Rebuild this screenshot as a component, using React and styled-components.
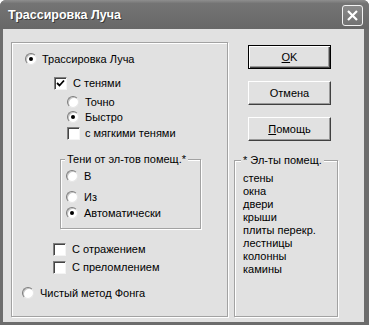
import React from 'react';
import styled, { createGlobalStyle } from 'styled-components';

const GlobalStyle = createGlobalStyle`
  html, body {
    margin: 0;
    padding: 0;
    background: #ffffff;
  }
  * {
    box-sizing: border-box;
  }
`;

const font = `"Liberation Sans", Arial, sans-serif`;

const Window = styled.div`
  width: 369px;
  height: 325px;
  display: flex;
  flex-direction: column;
  background: #6c6c6c;
  border-radius: 6px 6px 0 0;
  overflow: hidden;
  font-family: ${font};
  font-size: 11px;
  color: #000;
`;

const TitleBar = styled.div`
  height: 29px;
  flex: none;
  display: flex;
  align-items: center;
  justify-content: space-between;
  padding: 1px 6px 0 8px;
  background: linear-gradient(#8e8e8e 0%, #747474 12%, #6d6d6d 60%, #676767 100%);
`;

const Title = styled.div`
  font-size: 12.5px;
  font-weight: bold;
  color: #fff;
  text-shadow: 1px 1px 0 #3a3a3a;
`;

const CloseButton = styled.div`
  width: 21px;
  height: 21px;
  border: 1px solid #f2f2f2;
  border-radius: 3px;
  background: linear-gradient(#8a8a8a, #727272);
  display: flex;
  align-items: center;
  justify-content: center;
`;

const Body = styled.div`
  flex: 1;
  display: flex;
  align-items: flex-start;
  margin: 0 5px 3px 3px;
  padding: 13px 0 0 8px;
  background: #e1e1e1;
`;

const etched = `
  border: 1px solid #a2a2a2;
  box-shadow: inset 1px 1px 0 #fff, 1px 1px 0 #fff;
`;

const LeftPanel = styled.div`
  ${etched}
  width: 217px;
  height: 275px;
  display: flex;
  flex-direction: column;
  align-items: flex-start;
`;

const Row = styled.div`
  display: flex;
  align-items: center;
  height: 14px;
  margin-top: ${p => p.$top}px;
  margin-left: ${p => p.$indent}px;
  gap: ${p => p.$gap ?? 6}px;
`;

const Label = styled.span`
  line-height: 14px;
  white-space: nowrap;
`;

const RadioCircle = styled.span`
  width: 12px;
  height: 12px;
  border-radius: 50%;
  background: #fff;
  border: 1px solid;
  border-color: #7c7c7c #e6e6e6 #e6e6e6 #7c7c7c;
  box-shadow: inset 1px 1px 0 #c4c4c4;
  display: flex;
  align-items: center;
  justify-content: center;
  flex: none;
`;

const Dot = styled.span`
  width: 4px;
  height: 4px;
  border-radius: 50%;
  background: #000;
`;

const CheckSquare = styled.span`
  width: 13px;
  height: 13px;
  background: #fff;
  border: 1px solid;
  border-color: #808080 #f4f4f4 #f4f4f4 #808080;
  box-shadow: inset 1px 1px 0 #444;
  display: flex;
  align-items: center;
  justify-content: center;
  flex: none;
`;

const GroupBox = styled.div`
  ${etched}
  position: relative;
  width: ${p => p.$width}px;
  height: ${p => p.$height}px;
  margin-top: ${p => p.$top}px;
  margin-left: ${p => p.$indent || 0}px;
  display: flex;
  flex-direction: column;
  align-items: flex-start;
`;

const Legend = styled.span`
  position: absolute;
  top: -7px;
  left: ${p => p.$left}px;
  padding: 0 2px;
  line-height: 13px;
  background: #e1e1e1;
  white-space: nowrap;
`;

const RightColumn = styled.div`
  margin-left: 6px;
  display: flex;
  flex-direction: column;
  align-items: flex-start;
`;

const Button = styled.div`
  width: 83px;
  height: 24px;
  margin-top: ${p => p.$top}px;
  margin-left: 14px;
  display: flex;
  align-items: center;
  justify-content: center;
  background: #e1e1e1;
  border: 1px solid;
  border-color: ${p => (p.$default ? '#000' : '#fff #404040 #404040 #fff')};
  box-shadow: ${p =>
    p.$default
      ? 'inset 1px 1px 0 #fff, inset -1px -1px 0 #404040, inset -2px -2px 0 #9a9a9a'
      : 'inset -1px -1px 0 #9a9a9a'};
`;

const Mnemonic = styled.span`
  text-decoration: underline;
`;

const ItemList = styled.div`
  padding: 11px 0 0 8px;
  display: flex;
  flex-direction: column;
`;

const Item = styled.div`
  line-height: 13px;
  white-space: nowrap;
`;

function Radio({ checked }) {
  return <RadioCircle>{checked && <Dot />}</RadioCircle>;
}

function Check({ checked }) {
  return (
    <CheckSquare>
      {checked && (
        <svg width="9" height="9" viewBox="0 0 9 9">
          <path d="M1 4 L3.5 6.5 L8 1.5" fill="none" stroke="#000" strokeWidth="1.8" />
        </svg>
      )}
    </CheckSquare>
  );
}

function Option({ type, checked, label, top, indent, gap }) {
  return (
    <Row $top={top} $indent={indent} $gap={gap}>
      {type === 'radio' ? <Radio checked={checked} /> : <Check checked={checked} />}
      <Label>{label}</Label>
    </Row>
  );
}

const elements = ['стены', 'окна', 'двери', 'крыши', 'плиты перекр.', 'лестницы', 'колонны', 'камины'];

export default function App() {
  return (
    <>
      <GlobalStyle />
      <Window>
        <TitleBar>
          <Title>Трассировка Луча</Title>
          <CloseButton>
            <svg width="13" height="13" viewBox="0 0 13 13">
              <path d="M2 2 L11 11 M11 2 L2 11" stroke="#fff" strokeWidth="2.2" />
            </svg>
          </CloseButton>
        </TitleBar>
        <Body>
          <LeftPanel>
            <Option type="radio" checked label="Трассировка Луча" top={9} indent={13} gap={5} />
            <Option type="check" checked label="С тенями" top={10} indent={42} />
            <Option type="radio" label="Точно" top={5} indent={55} />
            <Option type="radio" checked label="Быстро" top={1} indent={55} />
            <Option type="check" label="с мягкими тенями" top={2} indent={55} gap={5} />
            <GroupBox $width={141} $height={70} $top={19} $indent={48}>
              <Legend $left={4}>Тени от эл-тов помещ.*</Legend>
              <Option type="radio" label="В" top={9} indent={5} />
              <Option type="radio" label="Из" top={7} indent={5} />
              <Option type="radio" checked label="Автоматически" top={2} indent={5} />
            </GroupBox>
            <Option type="check" label="С отражением" top={13} indent={41} />
            <Option type="check" label="С преломлением" top={4} indent={41} />
            <Option type="radio" label="Чистый метод Фонга" top={12} indent={10} />
          </LeftPanel>
          <RightColumn>
            <Button $default $top={3}>
              <Mnemonic>O</Mnemonic>K
            </Button>
            <Button $top={12}>Отмена</Button>
            <Button $top={12}>
              <Mnemonic>П</Mnemonic>омощь
            </Button>
            <GroupBox $width={104} $height={157} $top={19}>
              <Legend $left={6}>* Эл-ты помещ.</Legend>
              <ItemList>
                {elements.map(name => (
                  <Item key={name}>{name}</Item>
                ))}
              </ItemList>
            </GroupBox>
          </RightColumn>
        </Body>
      </Window>
    </>
  );
}
